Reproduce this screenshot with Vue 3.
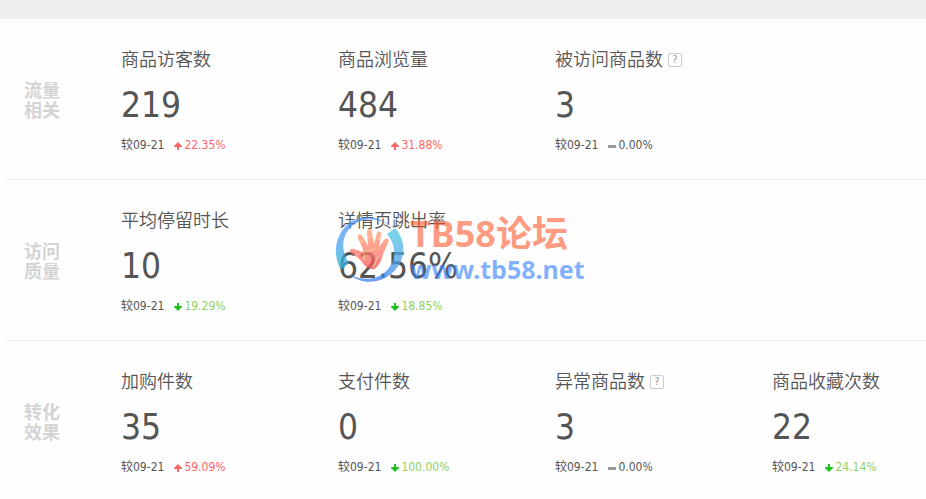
<script setup>
import { ref } from 'vue'

const compareDate = '09-21'

const groups = ref([
  {
    label: ['流量', '相关'],
    items: [
      { title: '商品访客数', value: '219', trend: 'up', change: '22.35%' },
      { title: '商品浏览量', value: '484', trend: 'up', change: '31.88%' },
      { title: '被访问商品数', value: '3', trend: 'flat', change: '0.00%', help: true }
    ]
  },
  {
    label: ['访问', '质量'],
    items: [
      { title: '平均停留时长', value: '10', trend: 'down', change: '19.29%' },
      { title: '详情页跳出率', value: '62.56%', trend: 'down', change: '18.85%' }
    ]
  },
  {
    label: ['转化', '效果'],
    items: [
      { title: '加购件数', value: '35', trend: 'up', change: '59.09%' },
      { title: '支付件数', value: '0', trend: 'down', change: '100.00%' },
      { title: '异常商品数', value: '3', trend: 'flat', change: '0.00%', help: true },
      { title: '商品收藏次数', value: '22', trend: 'down', change: '24.14%' }
    ]
  }
])
</script>

<template>
  <div class="overview">
    <div class="top-bar"></div>
    <section v-for="group in groups" :key="group.label[0]" class="group">
      <h2 class="group-label">
        <span v-for="line in group.label" :key="line">{{ line }}</span>
      </h2>
      <div class="metrics">
        <div v-for="item in group.items" :key="item.title" class="metric">
          <div class="title">
            {{ item.title }}
            <button v-if="item.help" type="button" class="help">?</button>
          </div>
          <div class="value">{{ item.value }}</div>
          <div class="compare">
            <span class="date">较{{ compareDate }}</span>
            <span class="change" :class="item.trend">
              <svg v-if="item.trend === 'up'" width="8" height="8" viewBox="0 0 8 8">
                <path d="M4 0 L8 4 V5 H5 V8 H3 V5 H0 V4 Z" />
              </svg>
              <svg v-else-if="item.trend === 'down'" width="8" height="8" viewBox="0 0 8 8">
                <path d="M4 8 L8 4 V3 H5 V0 H3 V3 H0 V4 Z" />
              </svg>
              <svg v-else width="8" height="8" viewBox="0 0 8 8">
                <path d="M0 3 H8 V6 H0 Z" />
              </svg>
              <span>{{ item.change }}</span>
            </span>
          </div>
        </div>
      </div>
    </section>

    <div class="watermark">
      <svg class="watermark-logo" width="70" height="68" viewBox="0 0 70 68">
        <defs>
          <linearGradient id="ring-left" x1="0" y1="1" x2="1" y2="0">
            <stop offset="0" stop-color="#29bcd8" />
            <stop offset="0.35" stop-color="#4f9df0" />
            <stop offset="1" stop-color="#4680f0" />
          </linearGradient>
          <linearGradient id="ring-right" x1="0" y1="1" x2="0" y2="0">
            <stop offset="0" stop-color="#3d7df0" />
            <stop offset="0.5" stop-color="#50a9e8" />
            <stop offset="1" stop-color="#4fcbe0" />
          </linearGradient>
          <linearGradient id="palm" x1="0" y1="0" x2="0" y2="1">
            <stop offset="0" stop-color="#ffa070" />
            <stop offset="0.6" stop-color="#ff7868" />
            <stop offset="1" stop-color="#f04d50" />
          </linearGradient>
        </defs>
        <path
          fill="url(#ring-left)"
          d="M55 11 C43 0 24 -1 12 10 C-1 22 -2 42 6 55 L14 48 C6 36 6 22 16 12 C27 2 42 2 55 11 Z"
        />
        <path
          fill="url(#ring-right)"
          d="M60 13 C71 25 71 42 61 54 C49 69 27 71 14 59 C29 67 44 65 53 54 C62 43 61 30 52 19 Z"
        />
        <path
          fill="url(#palm)"
          d="M27 47 C24 43 20 41 16 38 C13 35 16 33 19 34 L28 37 L28 34 L23 23 C22 19 26 18 28 22 L33 31 L32 17 C32 13 37 13 37 17 L39 29 L42 18 C43 15 47 16 46 20 L44 32 L49 25 C52 22 55 24 53 28 L48 39 C47 44 45 49 41 53 C37 56 31 53 27 47 Z"
        />
        <path
          class="palm-lines"
          d="M28 37 C30 40 30 44 28 46 M30 37 C34 35 38 36 40 33 M38 52 C41 48 41 43 45 40 M25 27 L28 26 M33 22 L37 21 M42 24 L45 24"
        />
      </svg>
      <div class="watermark-text">
        <span class="watermark-name">TB58论坛</span>
        <span class="watermark-site">www.tb58.net</span>
      </div>
    </div>
  </div>
</template>

<style>
body {
  margin: 0;
  background: #fefefe;
}
</style>

<style scoped>
.overview {
  position: relative;
  overflow: hidden;
  color: #555;
  font-family: 'DejaVu Sans Condensed', 'Noto Sans CJK SC', sans-serif;
}

.top-bar {
  height: 19px;
  background: #efefef;
}

.group {
  display: flex;
  margin-left: 5px;
  border-bottom: 1px solid #efefef;
}

.group:nth-of-type(3) {
  border-bottom: 0;
}

.group-label {
  display: flex;
  flex-direction: column;
  flex: none;
  width: 97px;
  margin: 0;
  padding: 62px 0 0 19px;
  box-sizing: content-box;
  color: #d4d4d4;
  font-size: 18px;
  font-weight: bold;
  line-height: 20px;
}

.metrics {
  flex: 1;
  display: grid;
  grid-template-columns: repeat(4, minmax(217px, 1fr));
  padding: 29px 0 25px;
}

.title {
  display: flex;
  align-items: center;
  gap: 5px;
  font-size: 18px;
  font-weight: 350;
  line-height: 24px;
}

.help {
  width: 14px;
  height: 14px;
  padding: 0;
  border: 1px solid #ccc;
  border-radius: 2px;
  background: transparent;
  color: #999;
  font-family: 'DejaVu Sans', sans-serif;
  font-size: 10px;
  line-height: 12px;
  text-align: center;
}

.value {
  margin: 13px 0 11px;
  font-size: 35px;
  line-height: 40px;
}

.compare {
  display: flex;
  gap: 10px;
  font-size: 12px;
  line-height: 18px;
}

.change {
  display: flex;
  align-items: center;
  gap: 2px;
}

.change svg {
  margin-top: 2px;
}

.up {
  color: #ff6666;
  fill: #ff6666;
}

.down {
  color: #8fd062;
  fill: #1fbf1f;
}

.flat {
  fill: #999;
}

.watermark {
  position: absolute;
  top: 215px;
  left: 335px;
  display: flex;
  gap: 5px;
  font-family: 'Noto Sans', 'Noto Sans CJK SC', sans-serif;
  font-weight: bold;
  pointer-events: none;
}

.watermark-logo {
  opacity: 0.75;
}

.palm-lines {
  fill: none;
  stroke: #ffc470;
  stroke-width: 1;
}

.watermark-text {
  display: flex;
  flex-direction: column;
}

.watermark-name {
  color: rgba(255, 88, 44, 0.6);
  font-size: 36px;
  line-height: 38px;
}

.watermark-site {
  color: rgba(44, 124, 255, 0.6);
  font-size: 25px;
  line-height: 32px;
}
</style>
